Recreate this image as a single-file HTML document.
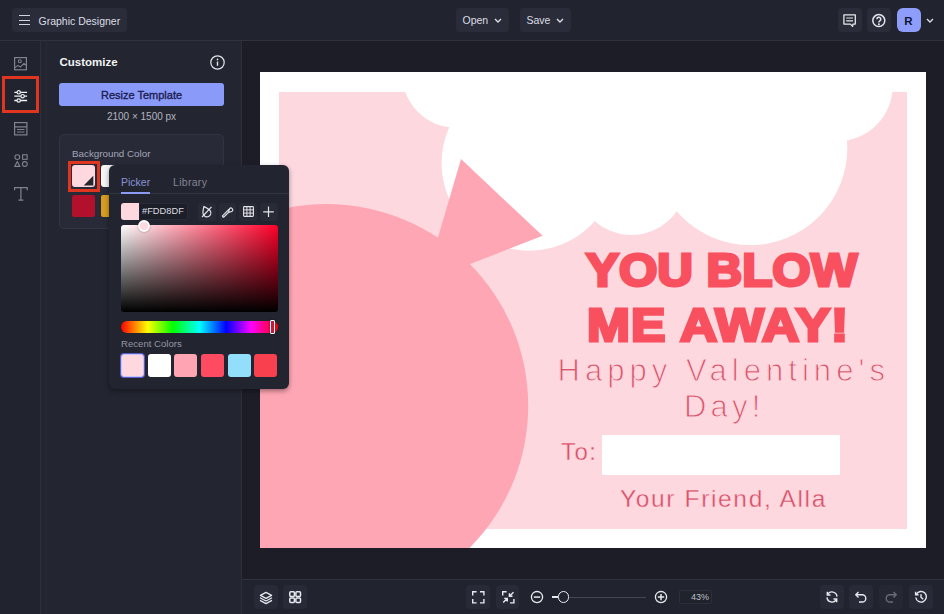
<!DOCTYPE html>
<html><head><meta charset="utf-8">
<style>
*{box-sizing:border-box;margin:0;padding:0}
html,body{width:944px;height:614px;overflow:hidden;background:#1c1d27;font-family:"Liberation Sans",sans-serif}
.a{position:absolute}
#top{left:0;top:0;width:944px;height:41px;background:#21232e;border-bottom:1px solid #30323e}
.btn{position:absolute;background:#2a2c39;border-radius:4px}
.t{position:absolute;white-space:nowrap;line-height:1}
#rail{left:0;top:41px;width:41px;height:573px;background:#21232e;border-right:1px solid #2d2f3b}
#panel{left:41px;top:41px;width:201px;height:573px;background:#232530;border-right:1px solid #2d2f3b}
#bottom{left:242px;top:579px;width:702px;height:35px;background:#21232e;border-top:1px solid #30323e}
svg{position:absolute;overflow:visible}
</style></head><body>

<!-- TOP BAR -->
<div id="top" class="a">
  <div class="btn" style="left:12px;top:8px;width:115px;height:24px"></div>
  <div class="a" style="left:18.5px;top:15.2px;width:11.5px;height:1.3px;background:#d2d4dd"></div>
  <div class="a" style="left:18.5px;top:19.6px;width:11.5px;height:1.3px;background:#d2d4dd"></div>
  <div class="a" style="left:18.5px;top:24px;width:11.5px;height:1.3px;background:#d2d4dd"></div>
  <div class="t" style="left:38.5px;top:15.5px;font-size:10.5px;color:#dcdee6">Graphic Designer</div>

  <div class="btn" style="left:456px;top:8px;width:53px;height:24px"></div>
  <div class="t" style="left:462.5px;top:14.9px;font-size:10.5px;color:#dcdee6">Open</div>
  <svg style="left:494px;top:17.9px" width="8" height="5" viewBox="0 0 8 5"><path d="M1 1l3 3 3-3" fill="none" stroke="#dcdee6" stroke-width="1.4"/></svg>

  <div class="btn" style="left:520px;top:8px;width:51px;height:24px"></div>
  <div class="t" style="left:526.5px;top:14.9px;font-size:10.5px;color:#dcdee6">Save</div>
  <svg style="left:556px;top:17.9px" width="8" height="5" viewBox="0 0 8 5"><path d="M1 1l3 3 3-3" fill="none" stroke="#dcdee6" stroke-width="1.4"/></svg>

  <div class="btn" style="left:838px;top:8px;width:24px;height:24px"></div>
  <svg style="left:843px;top:13.5px" width="14" height="14" viewBox="0 0 14 14"><path d="M.9 .9h11.4v9.2H9.9L9.6 12.4 7.4 10.1H.9z" fill="none" stroke="#e6e7ec" stroke-width="1.3" stroke-linejoin="round"/><path d="M3.2 4h6.8M3.2 6.8h6.8" stroke="#e6e7ec" stroke-width="1.2"/></svg>

  <div class="btn" style="left:867px;top:8px;width:24px;height:24px"></div>
  <svg style="left:872px;top:13.8px" width="14" height="14" viewBox="0 0 14 14"><circle cx="6.8" cy="6.6" r="6" fill="none" stroke="#e6e7ec" stroke-width="1.5"/><path d="M4.9 5.2a1.95 1.95 0 1 1 2.9 1.7c-.6.35-.9.6-.9 1.5" fill="none" stroke="#e6e7ec" stroke-width="1.5"/><circle cx="6.9" cy="10.2" r=".95" fill="#e6e7ec"/></svg>

  <div class="a" style="left:896.5px;top:8.3px;width:24px;height:23.7px;background:#8e9dfa;border-radius:6px"></div>
  <div class="t" style="left:896.5px;top:15.8px;width:24px;text-align:center;font-size:11.5px;font-weight:bold;color:#0f1436">R</div>
  <svg style="left:925.5px;top:17.6px" width="8" height="5" viewBox="0 0 8 5"><path d="M1 1l3 3 3-3" fill="none" stroke="#dcdee6" stroke-width="1.4"/></svg>
</div>

<!-- LEFT RAIL -->
<div id="rail" class="a"></div>
<!-- rail icons -->
<svg style="left:14px;top:56.5px" width="14" height="14" viewBox="0 0 14 14"><rect x=".6" y=".6" width="11.8" height="12.2" fill="none" stroke="#80838f" stroke-width="1.2"/><circle cx="5.8" cy="4.2" r="1.5" fill="none" stroke="#80838f" stroke-width="1.1"/><path d="M.8 10.6L3.6 8.6l3 1.3 3.4-3.6 2.4 2.2" fill="none" stroke="#80838f" stroke-width="1.1" stroke-linejoin="round"/></svg>
<div class="a" style="left:2px;top:76px;width:37px;height:37px;border:3px solid #e0361f"></div>
<svg style="left:14px;top:89.5px" width="14" height="13" viewBox="0 0 14 13"><path d="M.3 2.3h12.8M.3 6.2h12.8M.3 10.5h12.8" stroke="#f0f1f5" stroke-width="1.3"/><circle cx="4.7" cy="2.3" r="1.7" fill="#21232e" stroke="#f0f1f5" stroke-width="1.2"/><circle cx="8.6" cy="6.2" r="1.7" fill="#21232e" stroke="#f0f1f5" stroke-width="1.2"/><circle cx="4.7" cy="10.5" r="1.7" fill="#21232e" stroke="#f0f1f5" stroke-width="1.2"/></svg>
<svg style="left:14px;top:122px" width="14" height="14" viewBox="0 0 14 14"><rect x=".6" y=".6" width="12.3" height="12.3" fill="none" stroke="#80838f" stroke-width="1.2"/><path d="M.6 4.8h12.3M3 7.5h7.5M3 10h7.5" stroke="#80838f" stroke-width="1.2"/></svg>
<svg style="left:14px;top:154.3px" width="14" height="14" viewBox="0 0 14 14"><circle cx="3.3" cy="3.1" r="2.4" fill="none" stroke="#80838f" stroke-width="1.1"/><rect x="8.6" y=".8" width="4.5" height="4.5" fill="none" stroke="#80838f" stroke-width="1.1"/><path d="M3.3 7.6l2.6 4.8H.7z" fill="none" stroke="#80838f" stroke-width="1.1" stroke-linejoin="round"/><circle cx="10.8" cy="10" r="2.4" fill="none" stroke="#80838f" stroke-width="1.1"/></svg>
<svg style="left:14px;top:186.5px" width="14" height="14" viewBox="0 0 14 14"><path d="M.6 3.2V.7h12.6v2.5M6.9 .7v12.5M4.4 13.2h5" fill="none" stroke="#80838f" stroke-width="1.2"/></svg>
<!-- PANEL -->
<div id="panel" class="a"></div>
<div class="a" style="left:46px;top:41px;width:1px;height:573px;background:#282a35"></div>
<div class="t" style="left:59.5px;top:57.3px;font-size:11.5px;font-weight:bold;color:#f2f3f7">Customize</div>
<svg style="left:209.5px;top:54.5px" width="15" height="15" viewBox="0 0 15 15"><circle cx="7.5" cy="7.5" r="6.7" fill="none" stroke="#e6e7ec" stroke-width="1.2"/><path d="M7.5 6.5v4.3" stroke="#e6e7ec" stroke-width="1.4"/><circle cx="7.5" cy="4.4" r=".85" fill="#e6e7ec"/></svg>
<div class="a" style="left:59px;top:83px;width:165px;height:23px;background:#8a9af8;border-radius:3px"></div>
<div class="t" style="left:59px;top:89.7px;width:165px;text-align:center;font-size:11px;color:#1b2050;-webkit-text-stroke:.35px #1b2050">Resize Template</div>
<div class="t" style="left:59px;top:112px;width:165px;text-align:center;font-size:10px;color:#b3b5c0">2100 &#215; 1500 px</div>
<div class="a" style="left:59px;top:134px;width:165px;height:95px;background:#282a37;border:1px solid #323443;border-radius:5px"></div>
<div class="t" style="left:72px;top:148.8px;font-size:9.8px;color:#a3a6b8">Background Color</div>
<div class="a" style="left:72px;top:165px;width:22.5px;height:22px;background:#fdd8df;border-radius:3px"></div><svg style="left:72px;top:165px" width="23" height="22" viewBox="0 0 23 22"><path d="M21.3 10.8V20.4H11.7Z" fill="#25262e"/></svg>
<div class="a" style="left:67.5px;top:160.5px;width:32px;height:31.5px;border:3.5px solid #e0361f"></div>
<div class="a" style="left:101px;top:165px;width:23px;height:22px;background:#f4f4f4;border-radius:3px"></div>
<div class="a" style="left:72px;top:194.5px;width:22.5px;height:22.5px;background:#b3102c;border-radius:2px"></div>
<div class="a" style="left:101px;top:194.5px;width:23px;height:22.5px;background:#d89c22;border-radius:2px"></div>

<!-- CANVAS -->
<svg style="left:0;top:0" width="944" height="614" viewBox="0 0 944 614">
<defs><clipPath id="cc"><rect x="260" y="72" width="666" height="476"/></clipPath></defs>
<rect x="260" y="72" width="666" height="476" fill="#ffffff"/>
<g clip-path="url(#cc)">
<rect x="279" y="92" width="628" height="437" fill="#fdd8df"/>
<g fill="#ffffff">
<circle cx="456.2" cy="73.9" r="54"/>
<circle cx="529.2" cy="163.1" r="87.6"/>
<circle cx="631.4" cy="179.6" r="55.3"/>
<circle cx="750.3" cy="148.1" r="97"/>
<circle cx="837.5" cy="85.9" r="55.2"/>
<rect x="455" y="60" width="385" height="90"/>
</g>
<path d="M461 159.1L542.6 235.8L425 281.6Z" fill="#ffa6b4"/>
<circle cx="326.5" cy="405.8" r="201.7" fill="#ffa6b4"/>
<rect x="602" y="435" width="238" height="40" fill="#ffffff"/>
</g>
</svg>
<!-- CANVAS TEXT -->
<div class="t" id="h1" style="left:585.5px;top:247px;font-size:46px;font-weight:bold;color:#f8505f;-webkit-text-stroke:3px #f8505f;transform-origin:0 0;transform:scaleX(1.072);letter-spacing:0px">YOU BLOW</div>
<div class="t" id="h2" style="left:587px;top:302px;font-size:46px;font-weight:bold;color:#f8505f;-webkit-text-stroke:3px #f8505f;transform-origin:0 0;transform:scaleX(1.118);letter-spacing:1px">ME AWAY!</div>
<div class="t" id="h3" style="left:557.5px;top:354.5px;font-size:31px;color:#d9546c;letter-spacing:5.05px;-webkit-text-stroke:1px #fdd8df">Happy Valentine's</div>
<div class="t" id="h4" style="left:684px;top:391px;font-size:31px;color:#d9546c;letter-spacing:4.2px;-webkit-text-stroke:1px #fdd8df">Day!</div>
<div class="t" id="h5" style="left:561px;top:440px;font-size:24px;color:#d94f68;letter-spacing:1.5px;-webkit-text-stroke:.35px #fdd8df">To:</div>
<div class="t" id="h6" style="left:620px;top:487px;font-size:24.5px;color:#d94f68;letter-spacing:1.65px;-webkit-text-stroke:.35px #fdd8df">Your Friend, Alla</div>
<!-- POPUP -->
<div class="a" style="left:109px;top:164.5px;width:179.6px;height:224px;background:#22242f;border-radius:6px;box-shadow:0 2px 5px rgba(0,0,0,.4)"></div>
<div class="a" style="left:109px;top:193px;width:180px;height:1px;background:#33353f"></div>
<div class="t" style="left:121px;top:177px;font-size:10.5px;color:#8993d8">Picker</div>
<div class="a" style="left:121px;top:192px;width:29px;height:2px;background:#8c9bf2"></div>
<div class="t" style="left:173px;top:177px;font-size:10.5px;letter-spacing:.3px;color:#838696">Library</div>
<div class="a" style="left:121px;top:202.7px;width:18px;height:17.8px;background:#fdd8df;border-radius:3px 0 0 3px"></div>
<div class="a" style="left:139.5px;top:202.7px;width:48.5px;height:17.8px;background:#1d1f28;border:1px solid #292b36;border-left:none;border-radius:0 3px 3px 0"></div>
<div class="t" style="left:142px;top:207px;font-size:9.3px;color:#dcdde3">#FDD8DF</div>
<div class="btn" style="left:198px;top:203px;width:18px;height:18px;background:#282a36;border-radius:3px"></div>
<div class="btn" style="left:219px;top:203px;width:17px;height:18px;background:#282a36;border-radius:3px"></div>
<div class="btn" style="left:239px;top:203px;width:18px;height:18px;background:#282a36;border-radius:3px"></div>
<div class="btn" style="left:260px;top:203px;width:18px;height:18px;background:#282a36;border-radius:3px"></div>
<svg style="left:200px;top:204px" width="14" height="15" viewBox="0 0 14 15"><path d="M6.4 2C4.6 4.4 2.6 6.6 2.6 9a3.9 3.9 0 0 0 7.8 0C10.4 6.6 8.4 4.4 6.4 2z" fill="none" stroke="#e3e4ea" stroke-width="1.2" transform="rotate(-25 6.5 8)"/><path d="M2 13L11.5 2.8" stroke="#e3e4ea" stroke-width="1.2"/></svg>
<svg style="left:221px;top:205px" width="14" height="14" viewBox="0 0 14 14"><path d="M2.4 11.2L8.2 5.4" stroke="#e3e4ea" stroke-width="3" stroke-linecap="round"/><path d="M2.6 11L8.2 5.4" stroke="#282a36" stroke-width=".9" stroke-linecap="round"/><path d="M7.6 6.2l1-2.6a1.7 1.7 0 0 1 2.6 2.6l-2.6 1z" fill="#282a36" stroke="#e3e4ea" stroke-width="1.2" stroke-linejoin="round"/></svg>
<svg style="left:242.5px;top:206.3px" width="11" height="11" viewBox="0 0 11 11"><rect x=".6" y=".6" width="9.8" height="9.8" rx=".8" fill="none" stroke="#e3e4ea" stroke-width="1.1"/><path d="M3.9 .6v9.8M7.1 .6v9.8M.6 3.9h9.8M.6 7.1h9.8" stroke="#e3e4ea" stroke-width="1"/></svg>
<svg style="left:263px;top:206px" width="12" height="12" viewBox="0 0 12 12"><path d="M5.5 .5v10.5M.2 5.8h10.6" stroke="#e3e4ea" stroke-width="1.2"/></svg>
<div class="a" style="left:121px;top:225px;width:157px;height:87px;border-radius:3px;background:linear-gradient(to top,#000,rgba(0,0,0,0)),linear-gradient(to right,#fff,#ff0029)"></div>
<div class="a" style="left:137.5px;top:219.5px;width:12px;height:12px;border-radius:50%;background:#fdd8df;border:2px solid #fff;box-shadow:0 0 2px rgba(0,0,0,.4)"></div>
<div class="a" style="left:121px;top:321px;width:157px;height:12px;border-radius:6px;background:linear-gradient(to right,#ff0000 0%,#ffff00 17%,#00ff00 33%,#00ffff 50%,#0000ff 67%,#ff00ff 83%,#ff0000 100%)"></div>
<div class="a" style="left:269.5px;top:320px;width:5px;height:14px;border:1.5px solid #fff;border-radius:1px;background:#b81f3c;box-shadow:0 0 2px rgba(0,0,0,.5)"></div>
<div class="t" style="left:121px;top:339px;font-size:9.6px;color:#9396a5">Recent Colors</div>
<div class="a" style="left:121px;top:354px;width:23px;height:23px;border-radius:3px;background:#fdd8df;border:1.6px solid #c6c3fa;box-shadow:0 0 0 1px #565cc8"></div>
<div class="a" style="left:148px;top:354px;width:23px;height:23px;border-radius:3px;background:#ffffff"></div>
<div class="a" style="left:174px;top:354px;width:23px;height:23px;border-radius:3px;background:#ffa4b3"></div>
<div class="a" style="left:201px;top:354px;width:23px;height:23px;border-radius:3px;background:#ff4b61"></div>
<div class="a" style="left:228px;top:354px;width:23px;height:23px;border-radius:3px;background:#92defb"></div>
<div class="a" style="left:254px;top:354px;width:23px;height:23px;border-radius:3px;background:#f8404f"></div>
<!-- BOTTOM -->
<div id="bottom" class="a"></div>
<div class="btn" style="left:254px;top:585px;width:24px;height:24px;background:#282a37"></div>
<div class="btn" style="left:283px;top:585px;width:24px;height:24px;background:#282a37"></div>
<svg style="left:258px;top:589.5px" width="16" height="16" viewBox="0 0 16 16"><path d="M8 2.4L13.6 5.4 8 8.4 2.4 5.4Z" fill="none" stroke="#e8e9ee" stroke-width="1.2" stroke-linejoin="round"/><path d="M2 7.8L8 11 14 7.8M2 10.4L8 13.6 14 10.4" fill="none" stroke="#e8e9ee" stroke-width="1.2" stroke-linejoin="round"/></svg>
<svg style="left:289px;top:591px" width="13" height="13" viewBox="0 0 13 13"><rect x=".8" y=".8" width="4.6" height="4.6" rx="1" fill="none" stroke="#e8e9ee" stroke-width="1.5"/><rect x="6.9" y=".8" width="4.6" height="4.6" rx="1" fill="none" stroke="#e8e9ee" stroke-width="1.5"/><rect x=".8" y="6.9" width="4.6" height="4.6" rx="1" fill="none" stroke="#e8e9ee" stroke-width="1.5"/><rect x="6.9" y="6.9" width="4.6" height="4.6" rx="1" fill="none" stroke="#e8e9ee" stroke-width="1.5"/></svg>
<div class="btn" style="left:466px;top:585px;width:24px;height:24px;background:#282a37"></div>
<div class="btn" style="left:496px;top:585px;width:23px;height:24px;background:#282a37"></div>
<svg style="left:472px;top:591px" width="13" height="13" viewBox="0 0 13 13"><path d="M.7 4.6V.7h3.9M8 .7h3.9v3.9M11.9 8v3.9H8M4.6 11.9H.7V8" fill="none" stroke="#e8e9ee" stroke-width="1.4"/></svg>
<svg style="left:501.5px;top:591px" width="13" height="13" viewBox="0 0 13 13"><path d="M.7 4.6V.7h3.9M11.9 8v3.9H8" fill="none" stroke="#e8e9ee" stroke-width="1.4"/><path d="M11.5 1.2L7.6 5.1M7.4 2.2v3.1h3.1M1.2 11.5l3.9-3.9M5.3 10.6V7.4H2.2" fill="none" stroke="#e8e9ee" stroke-width="1.4"/></svg>
<svg style="left:530px;top:590px" width="14" height="14" viewBox="0 0 14 14"><circle cx="7" cy="7.1" r="5.6" fill="none" stroke="#e8e9ee" stroke-width="1.3"/><path d="M3.8 7.1h6.4" stroke="#e8e9ee" stroke-width="1.5"/></svg>
<div class="a" style="left:552px;top:596.5px;width:94px;height:1.2px;background:#444654"></div>
<div class="a" style="left:552px;top:596.4px;width:6px;height:1.5px;background:#e8e9ee"></div>
<div class="a" style="left:557.6px;top:591.2px;width:11.8px;height:11.8px;border-radius:50%;background:#21232e;border:1.5px solid #f0f1f5"></div>
<svg style="left:654px;top:590px" width="14" height="14" viewBox="0 0 14 14"><circle cx="7" cy="7.1" r="5.6" fill="none" stroke="#e8e9ee" stroke-width="1.3"/><path d="M3.8 7.1h6.4M7 3.9v6.4" stroke="#e8e9ee" stroke-width="1.5"/></svg>
<div class="a" style="left:678.5px;top:590px;width:33px;height:13.5px;border:1px solid #2c2e3a;border-radius:2px;background:#20222c"></div>
<div class="t" style="left:679px;top:593px;width:30px;text-align:right;font-size:9px;color:#bfc1ca">43%</div>
<div class="btn" style="left:820px;top:585px;width:24px;height:24px;background:#282a37"></div>
<div class="btn" style="left:849px;top:585px;width:24px;height:24px;background:#282a37"></div>
<div class="btn" style="left:879px;top:585px;width:24px;height:24px;background:#252732"></div>
<div class="btn" style="left:909px;top:585px;width:24px;height:24px;background:#282a37"></div>
<svg style="left:825px;top:590px" width="14" height="14" viewBox="0 0 14 14"><path d="M2.6 4.6A5 5 0 0 1 12 6.6M11.4 9.4A5 5 0 0 1 2 7.4" fill="none" stroke="#e8e9ee" stroke-width="1.4"/><path d="M2.3 1.8v3.2h3.2M11.7 12.2V9H8.5" fill="none" stroke="#e8e9ee" stroke-width="1.4"/></svg>
<svg style="left:854px;top:590px" width="14" height="14" viewBox="0 0 14 14"><path d="M4.5 2L1.8 4.8l2.7 2.7" fill="none" stroke="#e8e9ee" stroke-width="1.4"/><path d="M2 4.8h6.2a3.6 3.6 0 0 1 0 7.2H5" fill="none" stroke="#e8e9ee" stroke-width="1.4"/></svg>
<svg style="left:884px;top:590px" width="14" height="14" viewBox="0 0 14 14"><path d="M9.5 2l2.7 2.8-2.7 2.7" fill="none" stroke="#6a6c78" stroke-width="1.4"/><path d="M12 4.8H5.8a3.6 3.6 0 0 0 0 7.2H9" fill="none" stroke="#6a6c78" stroke-width="1.4"/></svg>
<svg style="left:914px;top:590px" width="14" height="14" viewBox="0 0 14 14"><path d="M2.4 4.2A5.3 5.3 0 1 1 1.8 7.5" fill="none" stroke="#e8e9ee" stroke-width="1.4"/><path d="M1.6 1.8v3h3" fill="none" stroke="#e8e9ee" stroke-width="1.4"/><path d="M7 4.2V7.3l2.2 2" fill="none" stroke="#e8e9ee" stroke-width="1.4"/></svg>

</body></html>
